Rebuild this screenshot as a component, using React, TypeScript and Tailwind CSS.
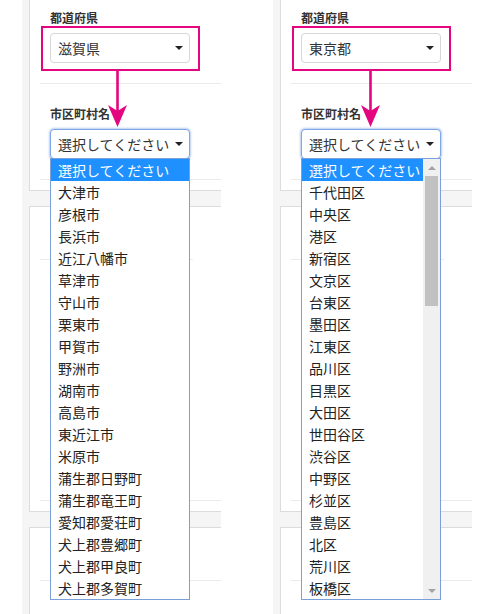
import React from "react";

const shiga = [
  "選択してください",
  "大津市",
  "彦根市",
  "長浜市",
  "近江八幡市",
  "草津市",
  "守山市",
  "栗東市",
  "甲賀市",
  "野洲市",
  "湖南市",
  "高島市",
  "東近江市",
  "米原市",
  "蒲生郡日野町",
  "蒲生郡竜王町",
  "愛知郡愛荘町",
  "犬上郡豊郷町",
  "犬上郡甲良町",
  "犬上郡多賀町",
];

const tokyo = [
  "選択してください",
  "千代田区",
  "中央区",
  "港区",
  "新宿区",
  "文京区",
  "台東区",
  "墨田区",
  "江東区",
  "品川区",
  "目黒区",
  "大田区",
  "世田谷区",
  "渋谷区",
  "中野区",
  "杉並区",
  "豊島区",
  "北区",
  "荒川区",
  "板橋区",
];

function Caret() {
  return (
    <span className="w-0 h-0 border-l-[4px] border-r-[4px] border-t-[4px] border-l-transparent border-r-transparent border-t-[#222]" />
  );
}

function Select({ value, focused }: { value: string; focused?: boolean }) {
  return (
    <div
      className={
        focused
          ? "flex items-center justify-between h-[30px] w-[140px] rounded-[4px] border border-[#7fa6e6] shadow-[0_0_2px_1px_rgba(128,166,230,0.55)] bg-white pl-[7px] pr-[6px] text-[14px] leading-[20px] text-[#333]"
          : "flex items-center justify-between h-[30px] w-[140px] rounded-[4px] border border-[#d6d6d6] bg-white pl-[7px] pr-[6px] text-[14px] leading-[20px] text-[#333]"
      }
    >
      <span className="whitespace-nowrap">{value}</span>
      <Caret />
    </div>
  );
}

function DropList({ items, scroll }: { items: string[]; scroll?: boolean }) {
  return (
    <div className="absolute left-0 top-[29px] z-10 w-[140px] h-[442px] border border-[#7b9fd8] bg-white flex overflow-hidden">
      <div className="flex-1 flex flex-col">
        {items.map((it, i) => (
          <div
            key={it}
            className={
              i === 0
                ? "h-[22px] shrink-0 pl-[7px] text-[14px] leading-[22px] whitespace-nowrap bg-[#1e90ff] text-white"
                : "h-[22px] shrink-0 pl-[7px] text-[14px] leading-[22px] whitespace-nowrap text-[#222]"
            }
          >
            {it}
          </div>
        ))}
      </div>
      {scroll && (
        <div className="w-[17px] h-full bg-[#f0f0f0] flex flex-col items-center">
          <div className="h-[17px] w-full flex items-center justify-center">
            <span className="w-0 h-0 border-l-[4px] border-r-[4px] border-b-[4px] border-l-transparent border-r-transparent border-b-[#a3a3a3]" />
          </div>
          <div className="w-[13px] h-[130px] bg-[#c1c1c1]" />
          <div className="flex-1" />
          <div className="h-[17px] w-full flex items-center justify-center">
            <span className="w-0 h-0 border-l-[4px] border-r-[4px] border-t-[4px] border-l-transparent border-r-transparent border-t-[#a3a3a3]" />
          </div>
        </div>
      )}
    </div>
  );
}

function Arrow({ left }: { left: number }) {
  return (
    <svg
      className="absolute top-[70px]"
      style={{ left }}
      width="21"
      height="58"
      viewBox="0 0 21 58"
    >
      <line x1="10.5" y1="0" x2="10.5" y2="42" stroke="#e4067f" strokeWidth="2.6" />
      <polygon points="1,35 10.5,57 20,35 10.5,41" fill="#e4067f" />
    </svg>
  );
}

function Panel({
  pref,
  items,
  scroll,
  arrowLeft,
  width,
}: {
  pref: string;
  items: string[];
  scroll?: boolean;
  arrowLeft: number;
  width: string;
}) {
  return (
    <div className={width}>
      <div className="relative h-[614px] bg-white overflow-hidden">
        <div className="ml-[22px] w-[199px] h-full bg-[#f5f5f5] overflow-hidden pl-[7px] flex flex-col gap-[15px]">
          {/* card 1 */}
          <div className="w-[300px] shrink-0 bg-white border-l border-b border-[#dcdcdc] pl-[10px] pb-[10px]">
            <div className="border-b border-[#ebebeb] pt-[9px] pb-[20px] pl-[10px]">
              <div className="h-[17px] text-[12px] leading-[17px] font-bold text-[#333]">都道府県</div>
              <div className="relative mt-[7px] w-[140px]">
                <Select value={pref} />
                <div className="absolute -left-[9px] -top-[7px] w-[159px] h-[45px] border-2 border-[#e4067f]" />
              </div>
            </div>
            <div className="border-b border-[#ebebeb] pt-[21px] pb-[20px] pl-[10px]">
              <div className="h-[17px] text-[12px] leading-[17px] font-bold text-[#333]">市区町村名</div>
              <div className="relative mt-[7px] w-[140px]">
                <Select value="選択してください" focused />
                <DropList items={items} scroll={scroll} />
              </div>
            </div>
          </div>
          {/* card 2 */}
          <div className="w-[300px] shrink-0 bg-white border-l border-t border-b border-[#dcdcdc] pl-[10px] pb-[10px]">
            <div className="h-[53px] flex flex-col justify-end">
              <div className="w-[153px] border-b border-[#ebebeb]" />
            </div>
            <div className="h-[241px] border-b border-[#ebebeb]" />
          </div>
          {/* card 3 */}
          <div className="w-[300px] shrink-0 bg-white border-l border-t border-[#dcdcdc] pl-[10px] flex-1">
            <div className="h-[53px] border-b border-[#ebebeb]" />
          </div>
        </div>
        <Arrow left={arrowLeft} />
      </div>
    </div>
  );
}

export default function App() {
  return (
    <div className="w-[500px] h-[614px] bg-white flex overflow-hidden font-['Noto_Sans_CJK_JP','Noto_Sans',sans-serif]">
      <div className="w-[251px] shrink-0">
        <Panel pref="滋賀県" items={shiga} arrowLeft={107} width="w-[251px]" />
      </div>
      <div className="w-[249px] shrink-0 overflow-hidden">
        <Panel pref="東京都" items={tokyo} scroll arrowLeft={109} width="w-[251px]" />
      </div>
    </div>
  );
}
